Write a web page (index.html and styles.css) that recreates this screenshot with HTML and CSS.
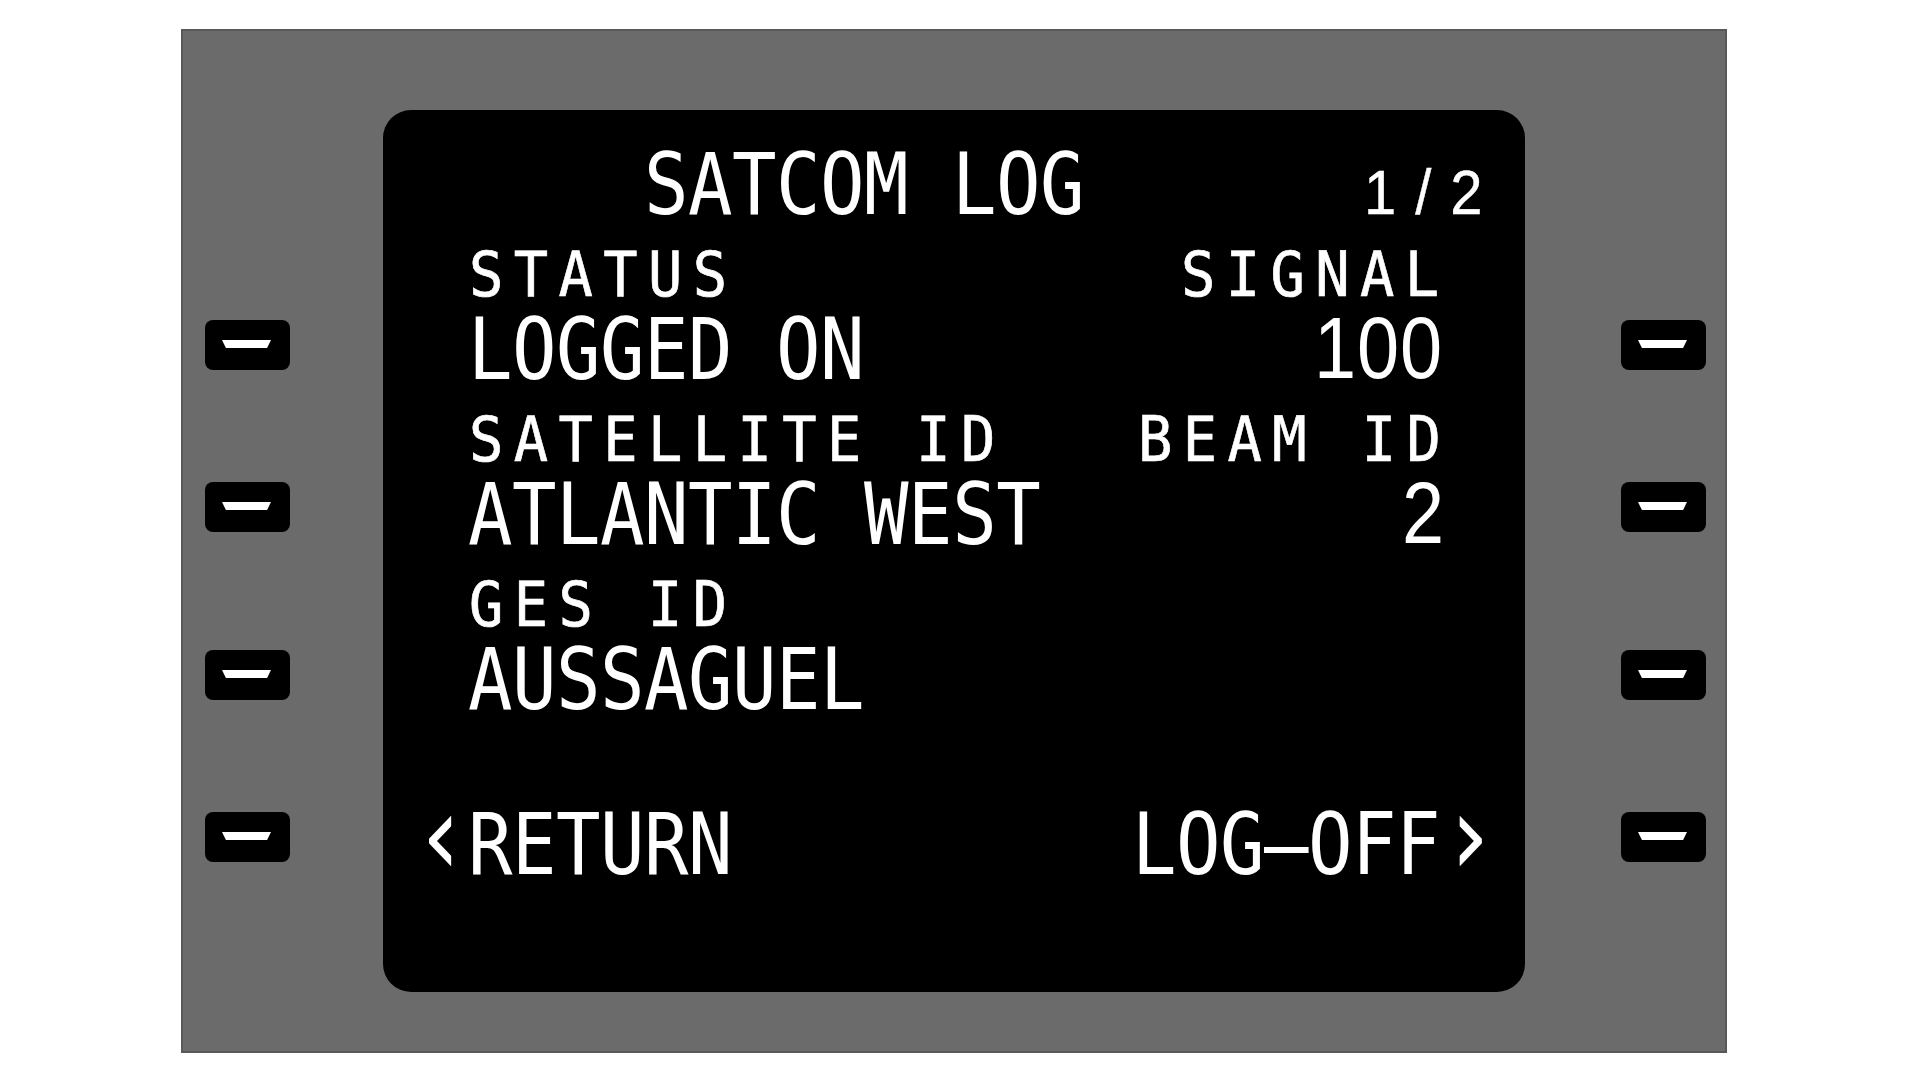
FILE: index.html
```html
<!DOCTYPE html>
<html lang="en">
<head>
<meta charset="utf-8">
<title>SATCOM LOG</title>
<link rel="stylesheet" href="styles.css">
</head>
<body>
<div class="bezel">
  <div class="keys">
    <div class="key"><span class="dash"></span></div>
    <div class="key"><span class="dash"></span></div>
    <div class="key"><span class="dash"></span></div>
    <div class="key"><span class="dash"></span></div>
  </div>
  <div class="screen">
    <div class="row"><span class="lg c5">SATCOM LOG</span><span class="sm num c21 page">1/2</span></div>
    <div class="row"><span class="sm c1">STATUS</span><span class="sm c17 rs">SIGNAL</span></div>
    <div class="row"><span class="lg c1">LOGGED ON</span><span class="lg num c20 rl">100</span></div>
    <div class="row"><span class="sm c1">SATELLITE ID</span><span class="sm c16 rs2">BEAM ID</span></div>
    <div class="row"><span class="lg c1">ATLANTIC WEST</span><span class="lg num c22 rl">2</span></div>
    <div class="row"><span class="sm c1">GES ID</span></div>
    <div class="row"><span class="lg c1">AUSSAGUEL</span></div>
    <div class="row"></div>
    <div class="row"><span class="lg c0"><span class="chev prev">‹</span>RETURN</span><span class="lg c16 lo">LOG—OFF<span class="chev">›</span></span></div>
  </div>
  <div class="keys">
    <div class="key"><span class="dash"></span></div>
    <div class="key"><span class="dash"></span></div>
    <div class="key"><span class="dash"></span></div>
    <div class="key"><span class="dash"></span></div>
  </div>
</div>
</body>
</html>
```
FILE: styles.css
```css
html, body {
  margin: 0;
  background: #ffffff;
}
body {
  padding: 29px 0 0 181px;
  font-family: "DejaVu Sans Mono", "Liberation Mono", monospace;
}
.bezel {
  box-sizing: border-box;
  width: 1546px;
  height: 1024px;
  background: #6b6b6b;
  border: 2px solid #595959;
  display: flex;
  padding: 79px 19px 0 22px;
}
.keys {
  width: 85px;
  display: flex;
  flex-direction: column;
  gap: 112px;
  padding-top: 210px;
}
.keys:first-child { margin-right: 93px; }
.keys:last-child { margin-left: 96px; }
.key {
  width: 85px;
  height: 50px;
  background: #000;
  border-radius: 8px;
  display: flex;
  justify-content: center;
  align-items: flex-start;
}
.key:nth-child(3) { margin-top: 6px; }
.dash {
  display: block;
  width: 49px;
  height: 8px;
  margin-top: 20px;
  margin-right: 2px;
  background: #fff;
  clip-path: polygon(0 0, 100% 0, 92% 100%, 8% 100%);
}
.screen {
  box-sizing: border-box;
  width: 1142px;
  height: 882px;
  background: #000;
  border-radius: 28px;
  padding: 33px 0 0 41px;
  display: flex;
  flex-direction: column;
}
.row {
  display: grid;
  grid-template-columns: repeat(24, 44px);
  grid-template-rows: 82.5px;
  height: 82.5px;
}
.row > span {
  grid-row: 1;
  justify-self: start;
  align-self: start;
  white-space: pre;
  color: #fff;
  transform-origin: 0 0;
}
.lg {
  font-size: 86px;
  line-height: 82.5px;
  letter-spacing: -0.6px;
  transform: scaleX(0.86);
}
.sm {
  font-size: 62px;
  line-height: 82.5px;
  letter-spacing: 11.3px;
  transform: scaleX(0.92);
  margin-top: 8.3px;
  margin-left: 1px;
  -webkit-text-stroke: 0.7px #fff;
}
.lg.num {
  font-family: "Liberation Sans", Arial, sans-serif;
  font-size: 88px;
  letter-spacing: 1px;
  transform: scaleX(0.86);
  margin-top: -0.7px;
}
.sm.num {
  font-family: "Liberation Sans", Arial, sans-serif;
  font-size: 63px;
  letter-spacing: 20.6px;
  margin-top: 7.9px;
  -webkit-text-stroke: 0.4px #fff;
}
.chev {
  font-size: 112px;
  line-height: 0;
}
.chev.prev {
  margin-left: -13px;
  letter-spacing: -3.2px;
}
.sm.page { margin-left: 16px; }
.sm.rs { margin-left: 8.5px; }
.sm.rs2 { margin-left: 9.5px; }
.lg.rl { margin-left: 10px; }
.lg.lo { margin-left: 4px; }
.c0 { grid-column-start: 1; }
.c1 { grid-column-start: 2; }
.c5 { grid-column-start: 6; }
.c16 { grid-column-start: 17; }
.c17 { grid-column-start: 18; }
.c20 { grid-column-start: 21; }
.c21 { grid-column-start: 22; }
.c22 { grid-column-start: 23; }
```
